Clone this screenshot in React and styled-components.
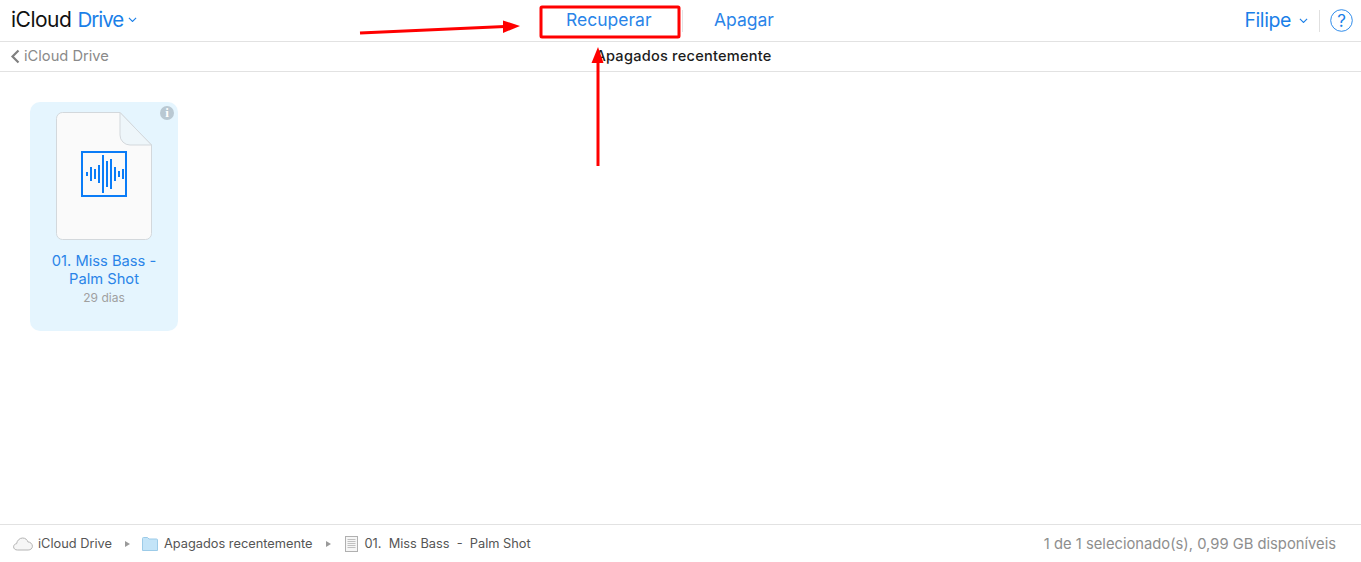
import React from 'react'
import styled, { createGlobalStyle } from 'styled-components'

// ---------------------------------------------------------------------------------------------------------------------
// Styled Components
// ---------------------------------------------------------------------------------------------------------------------
const GlobalStyle = createGlobalStyle`
  html, body, #root {
    margin: 0;
    height: 100%;
  }
  body {
    background: #fff;
    font-family: Inter, "Liberation Sans", sans-serif;
    overflow: hidden;
  }
`

const Page = styled.div`
  position: relative;
  display: flex;
  flex-direction: column;
  height: 562px;
`

const TopBar = styled.header`
  display: grid;
  grid-template-columns: 540px 143px 1fr auto;
  align-items: center;
  height: 41px;
  border-bottom: 1px solid #e2e2e2;
`

const Brand = styled.div`
  display: flex;
  align-items: center;
  padding: 0 0 2px 11px;
  font-size: 21px;
  letter-spacing: -0.5px;
  color: #111;
`

const BrandLink = styled.span`
  color: #1a7fe8;
  margin-left: 6px;
  display: flex;
  align-items: center;
  gap: 5px;
  font-size: 20.5px;
  letter-spacing: -1px;
`

const Action = styled.div`
  font-size: 17.5px;
  color: #2a84e8;
  height: 22px;
  line-height: 20px;
  padding-left: ${p => p.$indent}px;
  border-right: ${p => (p.$divider ? '1px solid #e4e4e4' : 'none')};
`

const UserArea = styled.div`
  display: flex;
  align-items: center;
  padding-right: 8px;
  color: #1a7fe8;
  font-size: 19.5px;
  letter-spacing: -0.4px;
`

const UserName = styled.span`
  margin: 0 8px 1px 0;
`

const VDivider = styled.span`
  width: 1px;
  height: 22px;
  background: #e0e0e0;
  margin: 0 10px 0 11px;
`

const SubBar = styled.div`
  position: relative;
  display: flex;
  align-items: center;
  justify-content: center;
  height: 29px;
  border-bottom: 1px solid #e2e2e2;
`

const BackLink = styled.div`
  position: absolute;
  left: 10px;
  top: 5px;
  display: flex;
  align-items: center;
  gap: 4px;
  font-size: 14.7px;
  color: #8a8a8a;
`

const Title = styled.div`
  font-size: 14.6px;
  font-weight: 450;
  letter-spacing: 0.22px;
  line-height: 29px;
  height: 29px;
  color: #1c1c1c;
  margin-left: 6px;
`

const Main = styled.main`
  flex: 1;
  padding: 30px;
`

const Card = styled.div`
  position: relative;
  box-sizing: border-box;
  width: 148px;
  height: 229px;
  padding-top: 10px;
  background: #e5f5fe;
  border-radius: 10px;
  display: flex;
  flex-direction: column;
  align-items: center;
`

const InfoBadge = styled.span`
  position: absolute;
  top: 4px;
  right: 4px;
  width: 14px;
  height: 14px;
  border-radius: 50%;
  background: #b9c8d2;
  color: #fff;
  font: bold 13px/14px "Liberation Serif", serif;
  text-align: center;
`

const DocWrap = styled.div`
  width: 96px;
  height: 128px;
  margin-bottom: 12px;
`

const FileName = styled.div`
  font-size: 14.7px;
  line-height: 18px;
  color: #2a84e8;
  text-align: center;
  width: 120px;
`

const FileAge = styled.div`
  font-size: 12px;
  line-height: 16px;
  color: #a0a0a0;
  margin-top: 2px;
`

const Footer = styled.footer`
  display: flex;
  align-items: center;
  justify-content: space-between;
  height: 37px;
  padding: 0 25px 0 13px;
  border-top: 1px solid #e2e2e2;
`

const Crumbs = styled.div`
  display: flex;
  align-items: center;
  font-size: 12.8px;
  color: #555;
`

const CrumbText = styled.span`
  margin-left: ${p => p.$gap}px;
  white-space: pre;
`

const CrumbArrow = styled.span`
  width: 0;
  height: 0;
  margin: 1px ${p => p.$right}px 0 13px;
  border-left: 5px solid #9a9a9a;
  border-top: 3.5px solid transparent;
  border-bottom: 3.5px solid transparent;
`

const Status = styled.div`
  font-size: 14.75px;
  color: #8e8e8e;
`

const Overlay = styled.svg`
  position: absolute;
  left: 0;
  top: 0;
  pointer-events: none;
`

// ---------------------------------------------------------------------------------------------------------------------
// Drawings
// ---------------------------------------------------------------------------------------------------------------------
const Chevron = ({ size = 9 }) => (
  <svg width={size} height={size * 0.6} viewBox="0 0 10 6" fill="none" stroke="currentColor" strokeWidth="1.2">
    <path d="M1 1l4 4 4-4" />
  </svg>
)

// x, top and bottom of each bar of the wave form, in the drawing of the document
const BARS = [
  [30, 60, 64],
  [34, 55, 69],
  [38, 57, 67],
  [42, 53, 71],
  [46, 43, 81],
  [50, 49, 75],
  [54, 47, 77],
  [58, 55, 69],
  [62, 59, 65],
  [66, 57, 67]
]

const DocIcon = () => (
  <svg width="96" height="128" viewBox="0 0 96 128">
    <path
      d="M6.500 .5H64L95.500 33v88.500a6 6 0 0 1-6 6H6.500a6 6 0 0 1-6-6V6.500a6 6 0 0 1 6-6z"
      fill="#fafafa"
      stroke="#d3d8dc"
    />
    <path d="M64 .5V23a10 10 0 0 0 10 10h21.500z" fill="#eef6fa" stroke="#d3d8dc" />
    <rect x="26" y="40" width="44" height="44" fill="none" stroke="#0a7cf7" strokeWidth="2" />
    {BARS.map(([x, y1, y2]) => (
      <rect key={x} x={x} y={y1} width="2" height={y2 - y1} fill="#0a7cf7" />
    ))}
  </svg>
)

const CloudIcon = () => (
  <svg width="20" height="14" viewBox="0 0 20 14">
    <path
      d="M4.500 13C2 13 .6 11.600 .6 9.800c0-1.700 1.300-3 3-3.100C4 3.600 6.500 1 9.600 1c2.700 0 4.700 1.700 5.300 3.900 2.500.1 4.500 2 4.500 4.300 0 2.200-1.800 3.800-4.200 3.800z"
      fill="#f6f6f6"
      stroke="#b4b4b4"
    />
  </svg>
)

const FolderIcon = () => (
  <svg width="16" height="14" viewBox="0 0 16 14">
    <path d="M.5 13.500V1.500a1 1 0 0 1 1-1h4l1.500 1.500h7.500a1 1 0 0 1 1 1v10.500z" fill="#c3e4f8" stroke="#9ccbe8" />
  </svg>
)

const PageIcon = () => (
  <svg width="13" height="16" viewBox="0 0 13 16">
    <rect x=".5" y=".5" width="12" height="15" fill="#f6f6f6" stroke="#b0b0b0" />
    <path d="M2.500 3.500h8M2.500 5.500h8M2.500 7.500h8M2.500 9.500h8M2.500 11.500h8" stroke="#c0c0c0" />
  </svg>
)

const HelpIcon = () => (
  <svg width="23" height="23" viewBox="0 0 23 23" fill="none" stroke="#1a7fe8" strokeWidth="0.9">
    <circle cx="11.500" cy="11.500" r="10.800" />
    <text x="11.500" y="17.500" textAnchor="middle" fontSize="17" fill="#1a7fe8" stroke="none" fontFamily="Inter, sans-serif">?</text>
  </svg>
)

// ---------------------------------------------------------------------------------------------------------------------
// Component
// ---------------------------------------------------------------------------------------------------------------------
const App = () => {
  // -------------------------------------------------------------------------------------------------------------------
  // Render
  // -------------------------------------------------------------------------------------------------------------------
  return (
    <Page>
      <GlobalStyle />
      <TopBar>
        <Brand>
          iCloud
          <BrandLink>Drive <Chevron /></BrandLink>
        </Brand>
        <Action $indent={26} $divider>Recuperar</Action>
        <Action $indent={31}>Apagar</Action>
        <UserArea>
          <UserName>Filipe</UserName>
          <Chevron />
          <VDivider />
          <HelpIcon />
        </UserArea>
      </TopBar>
      <SubBar>
        <BackLink>
          <svg width="10" height="15" viewBox="0 0 10 15" fill="none" stroke="#808080" strokeWidth="2.200">
            <path d="M8.500 1.500L2.500 7.500l6 6" />
          </svg>
          iCloud Drive
        </BackLink>
        <Title>Apagados recentemente</Title>
      </SubBar>
      <Main>
        <Card>
          <InfoBadge>i</InfoBadge>
          <DocWrap>
            <DocIcon />
          </DocWrap>
          <FileName>01. Miss Bass - Palm Shot</FileName>
          <FileAge>29 dias</FileAge>
        </Card>
      </Main>
      <Footer>
        <Crumbs>
          <CloudIcon />
          <CrumbText $gap={5}>iCloud Drive</CrumbText>
          <CrumbArrow $right={12} />
          <FolderIcon />
          <CrumbText $gap={6}>Apagados recentemente</CrumbText>
          <CrumbArrow $right={14} />
          <PageIcon />
          <CrumbText $gap={7}>01.  Miss Bass  -  Palm Shot</CrumbText>
        </Crumbs>
        <Status>1 de 1 selecionado(s), 0,99 GB disponíveis</Status>
      </Footer>
      {/* Annotations drawn over the page */}
      <Overlay width="1361" height="562" viewBox="0 0 1361 562">
        <rect x="541" y="7" width="138" height="30" rx="1" fill="none" stroke="#ff0000" strokeWidth="3" />
        <path d="M360 33L505 26.500" stroke="#ff0000" strokeWidth="3" />
        <path d="M503 20.500L520 26L503 33z" fill="#ff0000" />
        <path d="M598 166V62" stroke="#ff0000" strokeWidth="3" />
        <path d="M591.500 63L598 47L603.500 63z" fill="#ff0000" />
      </Overlay>
    </Page>
  )
}

export default App
